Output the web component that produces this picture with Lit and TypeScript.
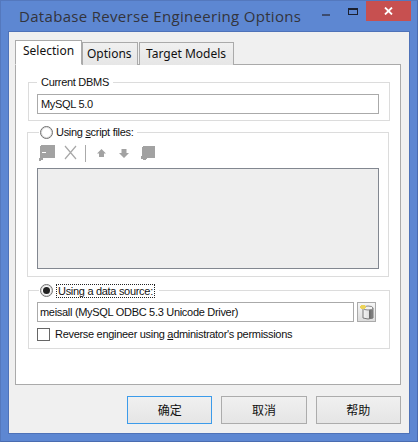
import { LitElement, html, css, svg } from "lit";
import { customElement } from "lit/decorators.js";

@customElement("app-root")
export class AppRoot extends LitElement {
  static styles = css`
    :host { display: block; width: 418px; height: 442px; overflow: hidden; background: #fff; }
    * { box-sizing: border-box; }
    .win {
      width: 418px; height: 442px; background: #5d87d2;
      border: 1px solid #4a6cb0; border-top-color: #5478bd; border-left-color: #5478bd;
      display: flex; flex-direction: column; font-family: "Liberation Sans", sans-serif; font-size: 11px; letter-spacing: -0.3px; color: #111;
    }
    .titlebar { height: 30px; display: flex; padding-left: 18px; flex: none; }
    .title { font-family: "Open Sans", sans-serif; font-size: 15px; letter-spacing: 0.31px; color: #33343c; line-height: 30px; flex: 1; }
    .min { width: 8px; height: 2px; background: #3c4c70; margin: 13px 18px 0 0; }
    .max { width: 10px; height: 7px; border: 1px solid #1b2030; border-top-width: 2px; margin: 7px 8px 0 0; }
    .close { width: 45px; height: 20px; background: #c75050; display: flex; align-items: center; justify-content: center; margin-right: 6px; }
    .client { flex: none; margin: 0 7px; width: 402px; height: 403px; background: #f0f0f0; border: 1px solid #4e72b8; padding: 8px 8px 0 6px; display: flex; flex-direction: column; }
    .tabs { display: flex; height: 25px; margin-bottom: -1px; align-items: flex-end; flex: none; position: relative; z-index: 1; font-family: "Noto Sans", sans-serif; font-size: 12px; letter-spacing: 0; }
    .tab { height: 23px; border: 1px solid #aaa; background: linear-gradient(#f0f0f0, #e6e6e6); line-height: 22px; border-bottom: none; }
    .tab.o { width: 56px; padding-left: 4px; }
    .tab.t { width: 95px; margin-left: 1px; padding-left: 6px; }
    .tab.s { width: 67px; height: 25px; background: #fff; padding: 0 0 2px 7px; line-height: 20px; border-bottom: 1px solid #fff; }
    .panel { width: 386px; height: 321px; flex: none; background: #fff; border: 1px solid #aaa; padding: 17px 11px 0 12px; display: flex; flex-direction: column; }
    .group { border: 1px solid #dcdcdc; display: flex; flex-direction: column; flex: none; }
    .g1 { width: 362px; height: 39px; padding: 0 8px; margin-bottom: 11px; }
    .g2 { width: 362px; height: 145px; margin: 0 0 13px -1px; padding: 0 9px; }
    .g3 { width: 362px; height: 59px; padding: 0 8px; }
    .legend { align-self: flex-start; background: #fff; margin: -8px 0 0 0; height: 15px; line-height: 15px; padding: 0 4px; display: flex; align-items: center; flex: none; }
    .g1 .legend { margin-bottom: 4px; }
    .field { height: 20px; border: 1px solid #aaa; line-height: 18px; padding-left: 2px; background: #fff; flex: none; }
    .g1 .field { width: 342px; padding-left: 3px; }
    .radio { width: 13px; height: 13px; border-radius: 50%; border: 1px solid #707070; box-shadow: inset 0 0 0 1px #dcdcdc; background: #fff; margin-right: 3px; flex: none; display: flex; align-items: center; justify-content: center; }
    .radio i { width: 7px; height: 7px; border-radius: 50%; background: #222; display: block; }
    .g2 .legend, .g3 .legend { padding: 0 4px 0 1px; margin-left: 2px; }
    .toolbar { display: flex; height: 18px; margin-top: 5px; flex: none; }
    .toolbar svg { display: block; }
    .list { width: 342px; height: 101px; margin-top: 5px; background: #eee; border: 1px solid #828790; flex: none; }
    .focus { border: 1px dotted #222; padding: 0 1px; line-height: 12px; height: 14px; }
    .row { display: flex; margin-top: 4px; flex: none; gap: 3px; }
    .row .field { width: 317px; }
    .browse { width: 19px; height: 20px; border: 1px solid #aaa; background: linear-gradient(#f6f6f6, #dcdcdc); display: flex; align-items: center; justify-content: center; }
    .check { display: flex; align-items: center; margin-top: 5px; flex: none; height: 14px; }
    .box { width: 13px; height: 13px; border: 1px solid #666; background: #fff; margin-right: 5px; }
    .buttons { display: flex; gap: 9px; padding: 11px 0 0 112px; flex: none; }
    .btn { width: 86px; height: 28px; border: 1px solid #acacac; background: linear-gradient(#f0f0f0, #e5e5e5); text-align: center; line-height: 26px; font-family: "Noto Sans CJK SC", sans-serif; font-size: 12px; letter-spacing: 0; color: #111; }
    .btn.def { border-color: #3c9bea; }
  `;

  render() {
    return html`<div class="win">
      <div class="titlebar">
        <div class="title">Database Reverse Engineering Options</div>
        <div class="min"></div>
        <div class="max"></div>
        <div class="close">
          <svg width="9" height="8" viewBox="0 0 9 8"><path d="M1 0.5L8 7.5M8 0.5L1 7.5" stroke="#fff" stroke-width="1.8"/></svg>
        </div>
      </div>
      <div class="client">
        <div class="tabs">
          <div class="tab s">Selection</div>
          <div class="tab o">Options</div>
          <div class="tab t">Target Models</div>
        </div>
        <div class="panel">
          <div class="group g1">
            <div class="legend">Current DBMS</div>
            <div class="field">MySQL 5.0</div>
          </div>
          <div class="group g2">
            <div class="legend"><span class="radio"></span><span>Using <u>s</u>cript files:</span></div>
            <div class="toolbar">
              <svg width="120" height="18" viewBox="0 0 120 18">
                ${svg`
                <path d="M4 0H18V13H6V15H4V16H2V13H3V1H4Z M5 7V8H9V7Z" fill="#a2a2a2" fill-rule="evenodd"/>
                <path d="M28 1L39 14M39 1L28 14" stroke="#a8a8a8" stroke-width="1.2" fill="none"/>
                <rect x="48" y="-1" width="1" height="18" fill="#aaa"/>
                <path d="M64.5 4L69 8.5H67V12H62V8.5H60Z" fill="#a2a2a2"/>
                <path d="M84.5 4H89.5V8H92L87 13L82 8H84.5Z" fill="#a2a2a2"/>
                <path d="M106 1H118V13H110V14H109V15H106V14H104V11H105V2H106Z" fill="#a2a2a2"/>
                `}
              </svg>
            </div>
            <div class="list"></div>
          </div>
          <div class="group g3">
            <div class="legend"><span class="radio"><i></i></span><span class="focus">Using a data source:</span></div>
            <div class="row">
              <div class="field">meisall (MySQL ODBC 5.3 Unicode Driver)</div>
              <div class="browse">
                <svg width="15" height="16" viewBox="0 0 15 16">
                  ${svg`
                  <defs><linearGradient id="cyl" x1="0" x2="1" y1="0" y2="0"><stop offset="0" stop-color="#f4f4f4"/><stop offset="0.55" stop-color="#e0e0e0"/><stop offset="0.6" stop-color="#666"/><stop offset="1" stop-color="#8a8a8a"/></linearGradient></defs>
                  <path d="M4 4H14V14Q9 16 4 14Z" fill="url(#cyl)" stroke="#777" stroke-width="1"/>
                  <ellipse cx="9" cy="4" rx="5" ry="2" fill="#f2f2f2" stroke="#888" stroke-width="1"/>
                  <path d="M2 1H6V5H2Z M1 2H7V4H1Z" fill="#ecd35a"/>
                  `}
                </svg>
              </div>
            </div>
            <div class="check"><span class="box"></span><span>Reverse engineer using <u>a</u>dministrator's permissions</span></div>
          </div>
        </div>
        <div class="buttons">
          <div class="btn def">确定</div>
          <div class="btn">取消</div>
          <div class="btn">帮助</div>
        </div>
      </div>
    </div>`;
  }
}
